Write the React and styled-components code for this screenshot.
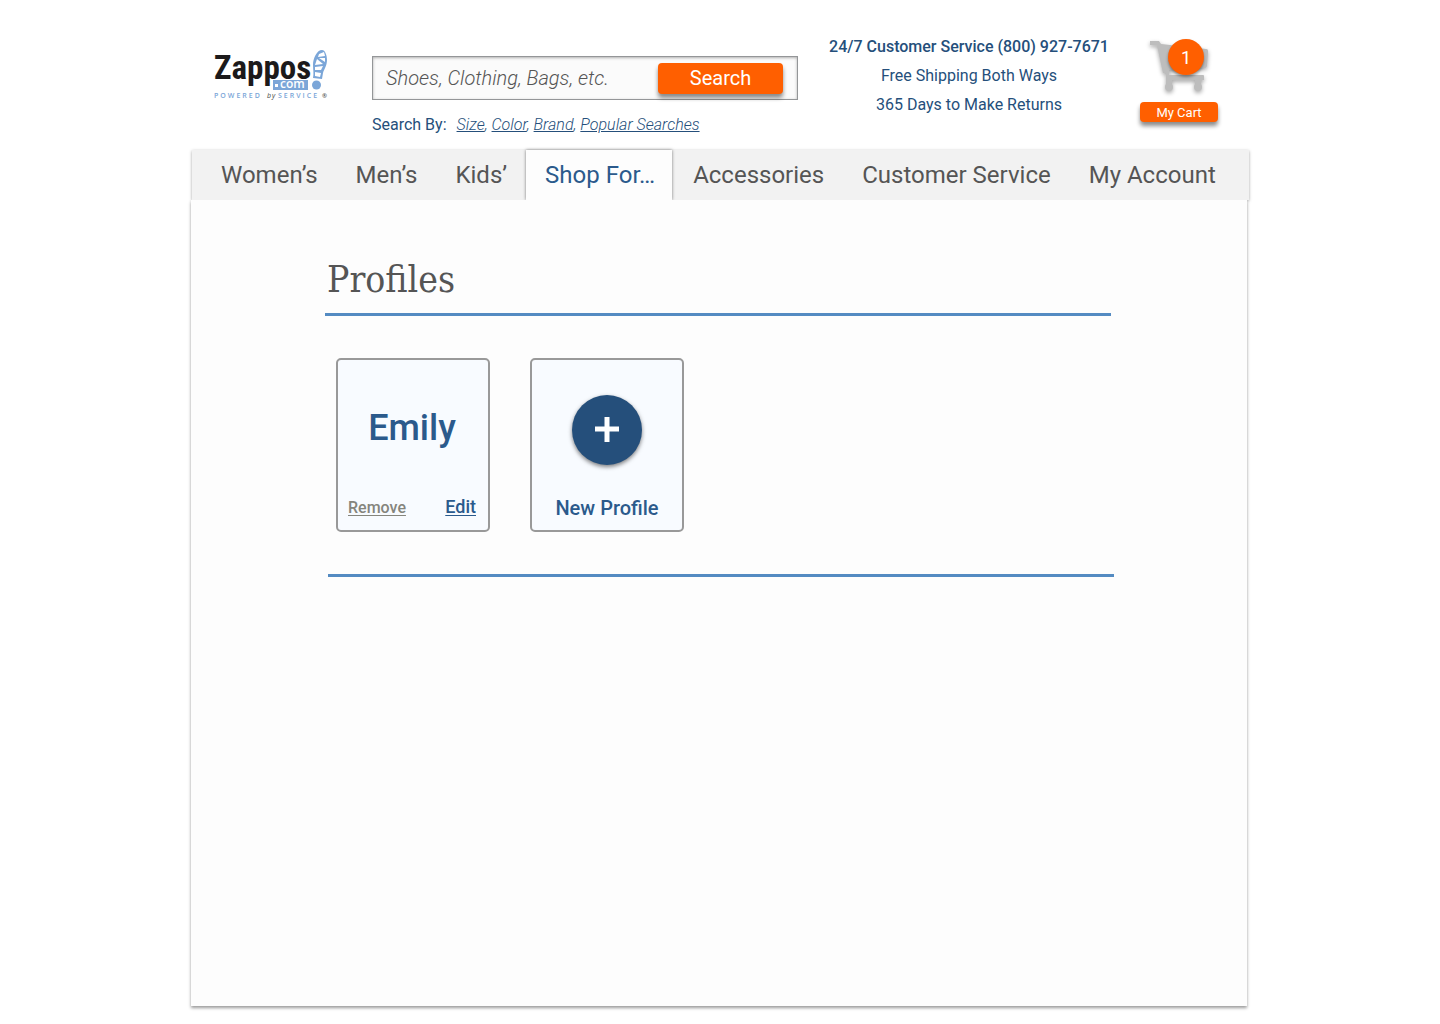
import React from "react";
import styled, { createGlobalStyle } from "styled-components";

const navy = "#254f7b";
const blue = "#2b5a8c";
const orange = "#ff5f00";
const grey = "#555555";

const GlobalStyle = createGlobalStyle`
  * { box-sizing: border-box; }
  body {
    margin: 0;
    background: #ffffff;
    color: ${navy};
    font-family: Roboto, "Liberation Sans", sans-serif;
  }
  button, input { font-family: inherit; }
`;

const Page = styled.div`
  display: flex;
  flex-direction: column;
  width: 100%;
  max-width: 1058px;
  min-height: 100vh;
  margin: 0 auto;
  padding-bottom: 18px;
`;

const Header = styled.header`
  display: flex;
  align-items: flex-start;
  justify-content: space-between;
  gap: 31px;
  height: 150px;
  padding: 36px 31px 0 23px;
`;

const LogoLink = styled.a`
  flex: none;
  margin: 10px 13px 0 0;
  svg { display: block; }
`;

const SearchArea = styled.form`
  flex: 1;
  max-width: 426px;
  padding-top: 20px;
`;

const SearchBox = styled.div`
  display: flex;
  align-items: flex-start;
  height: 44px;
  padding: 6px 14px 0 13px;
  background: #fbfbfb;
  border: 1px solid #949698;
  box-shadow: inset 0 1px 3px rgba(0, 0, 0, 0.3);
`;

const SearchInput = styled.input`
  flex: 1;
  min-width: 0;
  height: 30px;
  padding: 0;
  border: 0;
  outline: 0;
  background: transparent;
  color: ${grey};
  font-size: 20px;
  font-style: italic;
  font-weight: 300;
  &::placeholder { color: ${grey}; opacity: 1; }
`;

const SearchButton = styled.button`
  width: 125px;
  height: 31px;
  padding: 0;
  border: 0;
  border-radius: 4px;
  background: ${orange};
  box-shadow: 0 4px 4px rgba(0, 0, 0, 0.45);
  color: #ffffff;
  font-size: 20px;
  line-height: 31px;
`;

const SearchBy = styled.p`
  display: flex;
  gap: 10px;
  margin: 15px 0 0;
  font-size: 16px;
  line-height: 20px;
`;

const SearchLinks = styled.span`
  font-style: italic;
  font-weight: 300;
  a { color: inherit; }
`;

const Service = styled.ul`
  flex: none;
  width: 280px;
  margin: 0;
  padding: 1px 0 0;
  list-style: none;
  text-align: center;
  font-size: 16px;
  line-height: 20px;
`;

const ServiceLine = styled.li`
  margin-bottom: 9px;
  font-weight: ${(p) => (p.$strong ? 500 : 400)};
`;

const Cart = styled.div`
  position: relative;
  display: flex;
  flex: none;
  flex-direction: column;
  align-items: center;
  width: 78px;
`;

const CartIcon = styled.svg`
  display: block;
  filter: drop-shadow(0 2px 2px rgba(0, 0, 0, 0.35));
`;

const CartCount = styled.span`
  position: absolute;
  top: 3px;
  left: 28px;
  width: 36px;
  height: 36px;
  border-radius: 50%;
  background: ${orange};
  box-shadow: 0 2px 3px rgba(0, 0, 0, 0.4);
  color: #ffffff;
  font-size: 18px;
  line-height: 38px;
  text-align: center;
`;

const CartButton = styled.button`
  width: 100%;
  height: 20px;
  margin-top: 6px;
  padding: 0;
  border: 0;
  border-radius: 4px;
  background: ${orange};
  box-shadow: 0 4px 4px rgba(0, 0, 0, 0.45);
  color: #ffffff;
  font-size: 13px;
  line-height: 21px;
`;

const Nav = styled.nav`
  display: flex;
  height: 50px;
  margin-left: 1px;
  padding: 0 10px;
  background: #f2f2f2;
  box-shadow: 0 1px 3px rgba(0, 0, 0, 0.35);
`;

const NavLink = styled.a`
  margin-right: ${(p) => (p.$active ? "2px" : "0")};
  padding: 0 ${(p) => (p.$active ? "17px" : "19px")} 0 19px;
  background: ${(p) => (p.$active ? "#fdfdfd" : "transparent")};
  box-shadow: ${(p) => (p.$active ? "0 0 3px rgba(0, 0, 0, 0.5)" : "none")};
  color: ${(p) => (p.$active ? blue : grey)};
  font-size: 24px;
  line-height: 50px;
  text-decoration: none;
  white-space: nowrap;
`;

const Panel = styled.main`
  position: relative;
  flex: 1;
  margin-right: 2px;
  padding: 55px 133px 40px 134px;
  background: #fdfdfd;
  box-shadow: 0 2px 3px rgba(0, 0, 0, 0.4);
  clip-path: inset(0 -6px -6px -6px);
`;

const Title = styled.h1`
  margin: 0;
  padding: 0 2px 8px;
  color: ${grey};
  font-family: "Roboto Slab", "DejaVu Serif Condensed", "DejaVu Serif", serif;
  font-size: 37px;
  font-weight: 400;
  line-height: 50px;
`;

const Rule = styled.hr`
  height: 3px;
  margin: 0 ${(p) => (p.$end ? "0 0 3px" : "3px 0 0")};
  border: 0;
  background: #548bc2;
`;

const Cards = styled.div`
  display: flex;
  flex-wrap: wrap;
  gap: 40px;
  padding: 42px 11px;
`;

const Card = styled.article`
  display: flex;
  flex-direction: column;
  justify-content: space-between;
  width: 154px;
  height: 174px;
  padding: 44px 12px 12px 10px;
  border: 2px solid #999999;
  border-radius: 5px;
  background: #f8fbff;
`;

const Name = styled.h2`
  margin: 0;
  color: ${blue};
  font-size: 36px;
  font-weight: 500;
  line-height: 48px;
  text-align: center;
`;

const Actions = styled.div`
  display: flex;
  align-items: baseline;
  justify-content: space-between;
`;

const TextButton = styled.button`
  padding: 0;
  border: 0;
  background: transparent;
  color: ${(p) => (p.$quiet ? "#85857d" : blue)};
  font-size: ${(p) => (p.$quiet ? "16px" : "18px")};
  font-weight: 500;
  line-height: 20px;
  text-decoration: underline;
  text-underline-offset: 2px;
`;

const NewCard = styled.button`
  display: flex;
  flex-direction: column;
  align-items: center;
  justify-content: space-between;
  width: 154px;
  height: 174px;
  padding: 35px 0 10px;
  border: 2px solid #999999;
  border-radius: 5px;
  background: #f8fbff;
  color: ${blue};
  font-size: 20px;
  font-weight: 500;
  line-height: 24px;
`;

const PlusCircle = styled.span`
  display: flex;
  align-items: center;
  justify-content: center;
  width: 70px;
  height: 70px;
  border-radius: 50%;
  background: #254f7b;
  box-shadow: 0 2px 4px rgba(0, 0, 0, 0.5);
`;

const Logo = () => (
  <svg width="114" height="56" viewBox="0 0 114 56" role="img" aria-label="Zappos.com">
    <text
      x="0"
      y="33"
      fill="#1c1a1b"
      fontFamily="'Roboto Condensed', Lato, sans-serif"
      fontSize="33"
      fontWeight="700"
    >
      Zappos
    </text>
    <rect x="59" y="34" width="35" height="10" fill="#7ba6d8" />
    <rect x="61" y="38" width="3" height="3" fill="#ffffff" />
    <text x="66" y="42" fill="#ffffff" fontFamily="Open Sans, sans-serif" fontSize="12" fontWeight="600">
      com
    </text>
    <path
      d="M108 4c3 0 5 5 5 10 0 6-3 9-4 13l-1 6-9-1c1-5 0-8 0-13 0-7 4-15 9-15z"
      fill="#7ba6d8"
    />
    <g fill="#ffffff">
      <path d="M105 8l5-2 1 4-7 1z" />
      <path d="M103 13l6 5-8 1z" />
      <path d="M105 12l6 0 0 4z" />
      <path d="M101 21l8-1-2 4-6 0z" />
      <path d="M101 26l6 1-1 4-5-1z" />
    </g>
    <circle cx="102.500" cy="39" r="4.500" fill="#7ba6d8" />
    <g fill="#7ba6d8" fontFamily="Open Sans, sans-serif" fontSize="7" fontWeight="600">
      <text x="0" y="52" letterSpacing="2">
        POWERED
      </text>
      <text x="53" y="52" fill="#444444" fontStyle="italic" fontWeight="400" letterSpacing="1">
        by
      </text>
      <text x="64" y="52" letterSpacing="2">
        SERVICE
      </text>
      <text x="108" y="52" fill="#444444" fontSize="6">
        ®
      </text>
    </g>
  </svg>
);

const tabs = ["Women’s", "Men’s", "Kids’", "Shop For…", "Accessories", "Customer Service", "My Account"];

export default function App() {
  return (
    <>
      <GlobalStyle />
      <Page>
        <Header>
          <LogoLink href="#home">
            <Logo />
          </LogoLink>
          <SearchArea onSubmit={(e) => e.preventDefault()}>
            <SearchBox>
              <SearchInput type="text" aria-label="Search" placeholder="Shoes, Clothing, Bags, etc." />
              <SearchButton type="submit">Search</SearchButton>
            </SearchBox>
            <SearchBy>
              <span>Search By:</span>
              <SearchLinks>
                <a href="#size">Size</a>, <a href="#color">Color</a>, <a href="#brand">Brand</a>,{" "}
                <a href="#popular">Popular Searches</a>
              </SearchLinks>
            </SearchBy>
          </SearchArea>
          <Service>
            <ServiceLine $strong>24/7 Customer Service (800) 927-7671</ServiceLine>
            <ServiceLine>Free Shipping Both Ways</ServiceLine>
            <ServiceLine>365 Days to Make Returns</ServiceLine>
          </Service>
          <Cart>
            <CartIcon width="60" height="60" viewBox="0 0 60 60" fill="#bdbdbd" aria-hidden="true">
              <path d="M1 5h9l2 3 45 5c2 0 2 1 2 3l-1 13c0 2-1 3-3 3l-35 2v5h33c2 0 2 0 2 2v3h-3v6h-6v-6H23v6h-6V37h-3L8 9H1z" />
              <circle cx="20" cy="51" r="4" />
              <circle cx="49" cy="51" r="4" />
            </CartIcon>
            <CartCount>1</CartCount>
            <CartButton type="button">My Cart</CartButton>
          </Cart>
        </Header>
        <Nav>
          {tabs.map((tab) => (
            <NavLink key={tab} href="#tab" $active={tab === "Shop For…"}>
              {tab}
            </NavLink>
          ))}
        </Nav>
        <Panel>
          <Title>Profiles</Title>
          <Rule />
          <Cards>
            <Card>
              <Name>Emily</Name>
              <Actions>
                <TextButton type="button" $quiet>
                  Remove
                </TextButton>
                <TextButton type="button">Edit</TextButton>
              </Actions>
            </Card>
            <NewCard type="button">
              <PlusCircle>
                <svg width="24" height="26" viewBox="0 0 24 26" aria-hidden="true">
                  <path d="M12 0v25M0 12h24" stroke="#ffffff" strokeWidth="5" />
                </svg>
              </PlusCircle>
              New Profile
            </NewCard>
          </Cards>
          <Rule $end />
        </Panel>
      </Page>
    </>
  );
}
